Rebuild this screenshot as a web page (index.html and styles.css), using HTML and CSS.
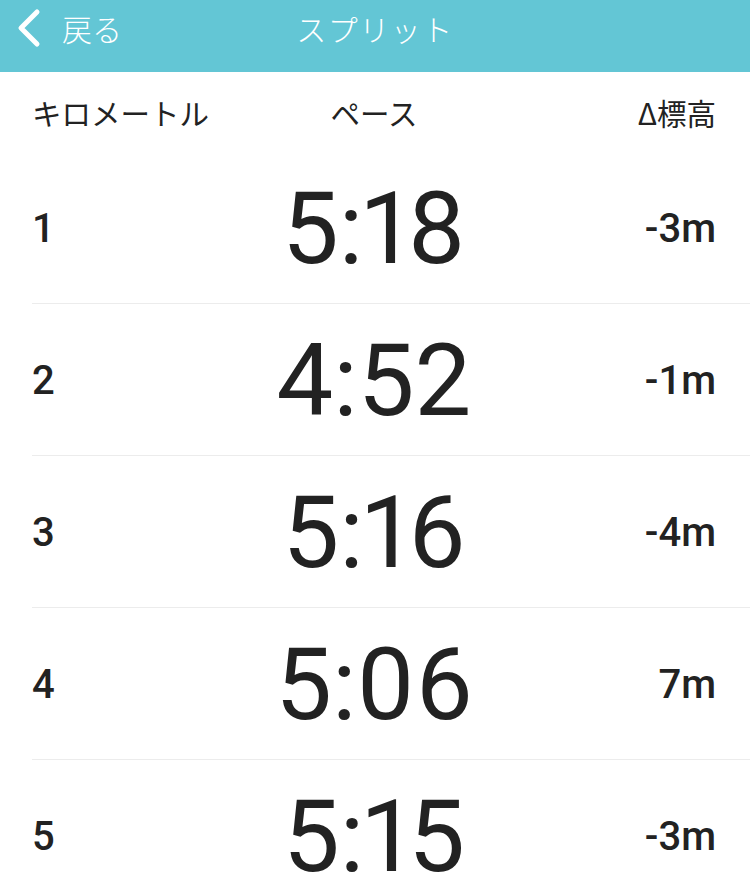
FILE: index.html
```html
<!DOCTYPE html>
<html lang="ja">
<head>
    <meta charset="UTF-8">
    <meta name="viewport" content="width=device-width, initial-scale=1.0">
    <title>スプリット</title>
    <link rel="stylesheet" href="styles.css">
</head>
<body>
    <div class="header">
        <a class="back" href="#">
            <svg class="chevron" width="26" height="40" viewBox="0 0 26 40">
                <polyline points="21,4 5,20 21,36" fill="none" stroke="#fff" stroke-width="5" stroke-linecap="round" stroke-linejoin="round"/>
            </svg>
            <span>戻る</span>
        </a>
        <h1 class="title">スプリット</h1>
        <div></div>
    </div>

    <div class="labels">
        <div class="col-km">キロメートル</div>
        <div class="col-pace">ペース</div>
        <div class="col-elev">Δ標高</div>
    </div>

    <div class="splits">
        <div class="split">
            <div class="col-km">1</div>
            <div class="col-pace">5:18</div>
            <div class="col-elev">-3m</div>
        </div>
        <div class="split">
            <div class="col-km">2</div>
            <div class="col-pace">4:52</div>
            <div class="col-elev">-1m</div>
        </div>
        <div class="split">
            <div class="col-km">3</div>
            <div class="col-pace">5:16</div>
            <div class="col-elev">-4m</div>
        </div>
        <div class="split">
            <div class="col-km">4</div>
            <div class="col-pace">5:06</div>
            <div class="col-elev">7m</div>
        </div>
        <div class="split">
            <div class="col-km">5</div>
            <div class="col-pace">5:15</div>
            <div class="col-elev">-3m</div>
        </div>
    </div>
</body>
</html>
```

FILE: styles.css
```css
*{margin: 0; padding: 0; box-sizing: border-box;}
body {
    width: 100%;
    background-color: #fff;
    color: #222;
    font-family: Roboto, "Noto Sans CJK JP", sans-serif;
}
.header {
    height: 72px;
    padding-bottom: 16px;
    background-color: #63c6d5;
    color: #fff;
    display: grid;
    grid-template-columns: 1fr auto 1fr;
    align-items: center;
}
.back {
    display: flex;
    align-items: center;
    gap: 20px;
    padding-left: 16px;
    color: #fff;
    text-decoration: none;
    font-size: 30px;
    font-weight: 300;
    font-family: "Noto Sans CJK JP", sans-serif;
}
.title {
    font-size: 30px;
    font-weight: 300;
    letter-spacing: 1.5px;
    font-family: "Noto Sans CJK JP", sans-serif;
}
.labels, .split {
    display: grid;
    grid-template-columns: 1fr auto 1fr;
    align-items: center;
    padding: 0 34px 0 32px;
}
.labels {
    height: 80px;
    font-family: "Noto Sans CJK JP", sans-serif;
    font-size: 29.5px;
    font-weight: 400;
}
.split {
    height: 152px;
    /* 왼쪽 32px 띄운 구분선 */
    background: linear-gradient(#ececec, #ececec) no-repeat 32px 100% / calc(100% - 32px) 1px;
}
.col-elev {
    text-align: right;
}
.split .col-km, .split .col-elev {
    font-size: 40px;
    font-weight: 500;
}
.split .col-pace {
    font-size: 101px;
    font-weight: 400;
    line-height: 1;
    font-variant-numeric: proportional-nums;
}
```
